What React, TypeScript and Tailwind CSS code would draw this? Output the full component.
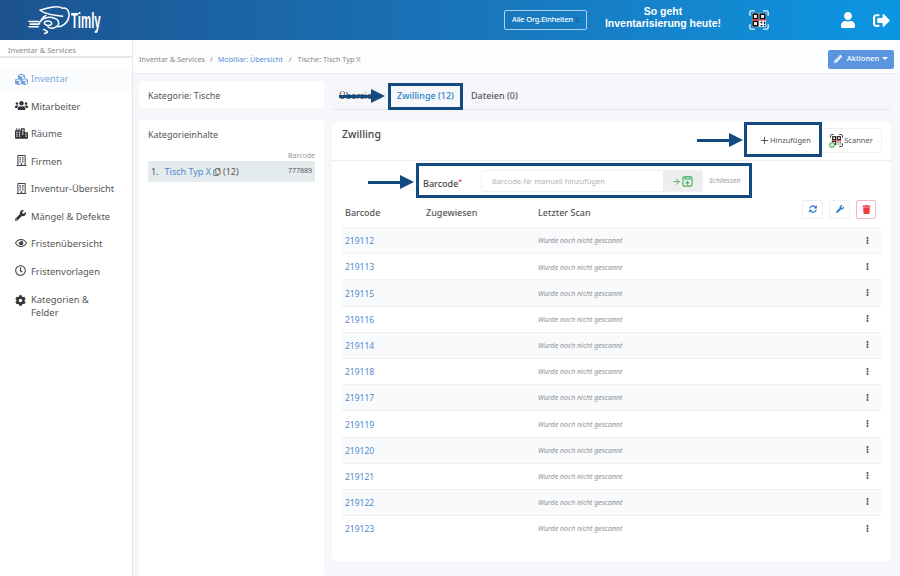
import { ChevronsUpDown, ArrowRight, Plus } from 'lucide-react'
import { FaCity, FaCog, FaCubes, FaEllipsisV, FaPencilAlt, FaRegBuilding, FaRegClock, FaRegCopy, FaRegEye, FaSignOutAlt, FaSyncAlt, FaTrash, FaUser, FaUsers, FaWrench } from 'react-icons/fa'

const barcodes = ['219112', '219113', '219115', '219116', '219114', '219118', '219117', '219119', '219120', '219121', '219122', '219123']

function QrIcon({ size, line }: { size: number; line?: boolean }) {
  return (
    <svg width={size} height={size} viewBox="0 0 24 24" fill="none">
      <path d="M1 7V3a2 2 0 0 1 2-2h4M17 1h4a2 2 0 0 1 2 2v4M23 17v4a2 2 0 0 1-2 2h-4M7 23H3a2 2 0 0 1-2-2v-4" stroke={line ? '#e3f3fd' : '#222'} strokeWidth="1.600" />
      <rect x="3.500" y="3.500" width="17" height="17" fill={line ? '#e8f2f8' : 'none'} />
      <rect x="5" y="5" width="5.500" height="5.500" stroke="#111" strokeWidth="2" />
      <rect x="13.500" y="5" width="5.500" height="5.500" stroke="#111" strokeWidth="2" />
      <rect x="5" y="13.500" width="5.500" height="5.500" stroke="#111" strokeWidth="2" />
      <path d="M14 14h2v2h-2zM18 14h1.500v3H18zM14 18h2v1.500h-2zM18 18h1.500v1.500H18z" fill="#111" />
      <path d="M3 12h18" stroke="#e0353b" strokeWidth="1.400" />
    </svg>
  )
}

function Logo() {
  return (
    <svg width="43" height="32" viewBox="85 10 130 95" fill="none" stroke="white" strokeWidth="4.500" strokeLinecap="round" strokeLinejoin="round">
      <path d="M88 62h28M92 70h24M88 78h28" strokeWidth="5" />
      <path d="M122 28C150 18 175 12 190 22c15-4 22 13 18 28-4 20-23 28-33 28" />
      <path d="M122 28c18 16 48 14 68 18" />
      <path d="M118 70c7-18 27-25 47-18 15 6 17 20 5 26-10 6-20 4-25 0" />
      <path d="M125 58c4-8 8-12 14-14M132 86c13 6 18 9 3 12" />
      <path d="M135 64c6-5 16-5 20 0s0 10-8 10-15-5-12-10z" />
    </svg>
  )
}

function SaveIcon() {
  return (
    <svg width="11" height="11" viewBox="0 0 12 12" fill="none" stroke="#3fb15c" strokeWidth="1.200">
      <path d="M2.500 1h7A1.500 1.500 0 0 1 11 2.500v7A1.500 1.500 0 0 1 9.500 11h-7A1.500 1.500 0 0 1 1 9.500v-7A1.500 1.500 0 0 1 2.500 1z" />
      <path d="M3.500 1v2.500h5V1M6 5.500v4M4 7.500h4" />
    </svg>
  )
}

function Arrow({ className }: { className: string }) {
  return (
    <div className={`absolute w-[46px] flex items-center ${className}`}>
      <div className="h-[3px] flex-1 bg-[#134a80]" />
      <div className="w-0 h-0 border-y-[7px] border-y-transparent border-l-[14px] border-l-[#134a80]" />
    </div>
  )
}

const navItems = [
  { label: 'Mitarbeiter', icon: <FaUsers size={13} className="text-[#333]" /> },
  { label: 'Räume', icon: <FaCity size={13} className="text-[#333]" /> },
  { label: 'Firmen', icon: <FaRegBuilding size={11} className="text-[#444] ml-[1px]" /> },
  { label: 'Inventur-Übersicht', icon: <FaRegBuilding size={11} className="text-[#444] ml-[1px]" /> },
  { label: 'Mängel & Defekte', icon: <FaWrench size={11} className="text-[#333]" /> },
  { label: 'Fristenübersicht', icon: <FaRegEye size={12} className="text-[#444]" /> },
  { label: 'Fristenvorlagen', icon: <FaRegClock size={11} className="text-[#444]" /> },
]

export default function App() {
  return (
    <div className="w-[900px] h-[576px] overflow-hidden flex flex-col bg-[#f5f7fb] font-['Noto_Sans',sans-serif] text-[#555]">
      <header className="h-[40px] shrink-0 flex items-center bg-gradient-to-r from-[#1c5390] to-[#0a96e2] text-white">
        <div className="w-[133px] pl-[28px] flex items-center">
          <Logo />
          <span className="font-['Liberation_Sans',sans-serif] font-bold text-[22px] scale-x-[0.52] origin-left">Timly</span>
        </div>
        <div className="w-[371px]" />
        <div className="w-[83px] h-[20px] border border-[#a9d3ee] rounded-[2px] flex items-center justify-between pl-[7px] pr-[5px] text-[7.500px] font-medium tracking-[-0.2px] whitespace-nowrap">
          Alle Org.Einheiten
          <ChevronsUpDown size={7} className="shrink-0 text-[#14395f]" />
        </div>
        <div className="w-[152px] mb-[6px] text-center font-['Liberation_Sans',sans-serif] font-bold text-[10.500px] leading-[12.500px]">
          So geht<br />Inventarisierung heute!
        </div>
        <div className="ml-[10px] -mt-[1px]"><QrIcon size={20} line /></div>
        <div className="flex-1 flex justify-end items-center gap-[17px] pr-[10px]">
          <FaUser size={16} />
          <FaSignOutAlt size={17} />
        </div>
      </header>

      <div className="flex flex-1 min-h-0">
        <aside className="w-[133px] shrink-0 bg-white border-r border-[#e4e7ec]">
          <div className="h-[18px] border-b-2 border-[#e5e5e5] pl-[8px] pt-[4px] text-[7.500px] leading-[12px] text-[#888]">Inventar &amp; Services</div>
          <nav className="pt-[8px] text-[9.400px]">
            <div className="h-[27px] flex items-center pl-[15px] bg-[#fbfcfd] text-[#7aa7dc]">
              <span className="w-[16px] flex"><FaCubes size={13} className="text-[#6f9fd8]" /></span>
              Inventar
            </div>
            {navItems.map((item) => (
              <div key={item.label} className="h-[27.500px] flex items-center pl-[15px]">
                <span className="w-[16px] flex -mt-[2px]">{item.icon}</span>
                {item.label}
              </div>
            ))}
            <div className="flex items-start pl-[15px] pt-[7px] leading-[13px]">
              <span className="w-[16px] mt-[2px]"><FaCog size={11} className="text-[#333]" /></span>
              <span>Kategorien &amp;<br />Felder</span>
            </div>
          </nav>
        </aside>

        <main className="flex-1 min-w-0 flex flex-col">
          <div className="h-[34px] shrink-0 bg-[#fcfdfe] border-b border-[#e9ebef] flex items-center px-[6px] pt-[5px] text-[7.300px] text-[#888]">
            <span>Inventar &amp; Services</span>
            <span className="mx-[5px]">/</span>
            <span className="text-[#5b8dd2]">Mobiliar: Übersicht</span>
            <span className="mx-[6px]">/</span>
            <span>Tische: Tisch Typ X</span>
            <button className="ml-auto w-[66px] h-[19px] bg-[#5b95e0] rounded-[2px] text-white text-[7.500px] font-medium flex items-center justify-center">
              <FaPencilAlt size={8} className="mr-[5px]" />
              Aktionen
              <span className="ml-[3px] mb-[2px] border-x-[3px] border-t-[3px] border-x-transparent border-t-white" />
            </button>
          </div>

          <div className="flex-1 min-h-0 flex gap-[8px] pl-[6px] pr-[9px] pt-[7px]">
            <div className="w-[185px] shrink-0 flex flex-col gap-[12px]">
              <div className="h-[27px] bg-white rounded-[4px] flex items-center pl-[9px] pt-[2px] text-[9px]">Kategorie: Tische</div>
              <div className="flex-1 bg-white rounded-[4px] px-[9px] pt-[8px]">
                <div className="text-[9px] leading-[13px]">Kategorieinhalte</div>
                <div className="text-right text-[7px] text-[#999] mt-[9px] leading-[11px]">Barcode</div>
                <div className="h-[21px] bg-[#e4ebed] flex items-center px-[3px] text-[9px]">
                  <span className="mr-[6px]">1.</span>
                  <span className="text-[#4f8ad0]">Tisch Typ X</span>
                  <FaRegCopy size={8} className="mx-[2px]" />
                  <span>(12)</span>
                  <span className="ml-auto text-[7px]">777889</span>
                </div>
              </div>
            </div>

            <div className="flex-1 min-w-0 flex flex-col">
              <div className="h-[29px] shrink-0 border-b border-[#e4e7ec] flex items-center text-[9px] font-medium pt-[2px]">
                <span className="w-[55px] pl-[7px] text-[#555]">Übersicht</span>
                <span className="w-[77px] text-center text-[#2a7fc4]">Zwillinge (12)</span>
                <span className="pl-[7px]">Dateien (0)</span>
              </div>

              <section className="mt-[12px] h-[439px] shrink-0 bg-white rounded-[5px] flex flex-col">
                <div className="h-[39px] shrink-0 border-b border-[#ebedf0] flex justify-between pl-[10px] pr-[9px]">
                  <h2 className="text-[10.500px] leading-[14px] pt-[5px] font-medium text-[#444]">Zwilling</h2>
                  <div className="flex items-start pt-[6px]">
                    <button className="w-[70px] h-[25px] text-[7.500px] flex items-center justify-center text-[#555]">
                      <Plus size={11} strokeWidth={1.600} className="text-[#222]" />
                      Hinzufügen
                    </button>
                    <button className="w-[61px] h-[25px] border border-[#eef0f3] rounded-[2px] text-[7.500px] flex items-center justify-center gap-[1px] text-[#555] ml-[1px]">
                      <span className="relative">
                        <QrIcon size={13} />
                        <span className="absolute -left-[1px] -bottom-[1px] w-[6px] h-[6px] rounded-full border border-[#4caf50] bg-[#cfe9d0]" />
                      </span>
                      Scanner
                    </button>
                  </div>
                </div>

                <div className="h-[37px] shrink-0 flex items-center pl-[91px] pt-[3px]">
                  <label className="w-[58px] pt-[5px] text-[9px] font-medium text-[#444]">Barcode<span className="text-red-500 text-[7px] align-top">*</span></label>
                  <div className="w-[222px] h-[22px] flex border border-[#f0f1f3] rounded-[2px]">
                    <span className="w-[181px] pl-[10px] text-[7.500px] leading-[20px] text-[#b0b3b8]">Barcode-Nr manuell hinzufügen</span>
                    <span className="flex-1 bg-[#eeeeee] flex items-center justify-center gap-[1px]">
                      <ArrowRight size={9} strokeWidth={2.500} className="text-[#3fb15c]" />
                      <SaveIcon />
                    </span>
                  </div>
                  <span className="ml-[6px] text-[7px] italic text-[#999]">Schliessen</span>
                </div>

                <div className="h-[29px] shrink-0 mx-[10px] flex items-center pt-[1px] text-[9px] font-medium">
                  <span className="w-[84px] pl-[3px]">Barcode</span>
                  <span className="w-[112px]">Zugewiesen</span>
                  <span>Letzter Scan</span>
                  <div className="ml-auto flex items-center gap-[6px] pr-[5px] -mt-[8px]">
                    <span className="w-[21px] h-[19px] border border-[#eef0f3] rounded-[2px] flex items-center justify-center text-[#2f7fd0]"><FaSyncAlt size={8} /></span>
                    <span className="w-[21px] h-[19px] border border-[#eef0f3] rounded-[2px] flex items-center justify-center text-[#2f7fd0]"><FaWrench size={8} /></span>
                    <span className="w-[20px] h-[19px] border border-[#f0b8bc] rounded-[2px] flex items-center justify-center text-[#ea3f48]"><FaTrash size={9} /></span>
                  </div>
                </div>

                <div className="mx-[10px]">
                  {barcodes.map((code, i) => (
                    <div key={code} className={`h-[26.200px] flex items-center pt-[2px] border-t border-[#f0f1f4] ${i % 2 === 0 ? 'bg-[#f9fafc]' : 'bg-white'}`}>
                      <span className="w-[196px] pl-[3px] text-[8.500px] text-[#4f8ad0]">{code}</span>
                      <span className="text-[7px] italic text-[#8b8f94]">Wurde noch nicht gescannt</span>
                      <FaEllipsisV size={7} className="ml-auto mr-[10px] -mt-[3px] text-[#555]" />
                    </div>
                  ))}
                </div>
              </section>
            </div>
          </div>
        </main>
      </div>

      {/* Annotation boxes and arrows from the help article */}
      <div className="absolute left-[388px] top-[83px] w-[75px] h-[27px] border-[3px] border-[#134a80]" />
      <div className="absolute left-[744px] top-[122px] w-[78px] h-[35px] border-[3px] border-[#134a80]" />
      <div className="absolute left-[416px] top-[163px] w-[336px] h-[35px] border-[3px] border-[#134a80]" />
      <Arrow className="left-[339px] top-[89px]" />
      <Arrow className="left-[697px] top-[133px]" />
      <Arrow className="left-[368px] top-[175px]" />
    </div>
  )
}
